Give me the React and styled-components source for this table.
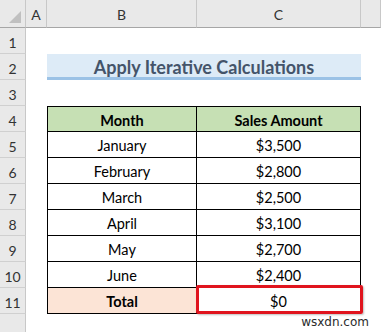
import React from 'react'
import styled, { createGlobalStyle } from 'styled-components'

const GlobalStyle = createGlobalStyle`
  html, body { margin: 0; padding: 0; background: #fff; }
  body { font-family: Lato, "Open Sans", sans-serif; overflow: hidden; }
`

const SALES = [
  { month: 'January', amount: '$3,500' },
  { month: 'February', amount: '$2,800' },
  { month: 'March', amount: '$2,500' },
  { month: 'April', amount: '$3,100' },
  { month: 'May', amount: '$2,700' },
  { month: 'June', amount: '$2,400' },
]

const Sheet = styled.div`
  position: relative;
  display: grid;
  grid-template-columns: 26px 21px 150px 164px 1fr;
  grid-template-rows: 28px repeat(12, 26px);
  width: 381px;
  height: 332px;
  overflow: hidden;
  background: #fff;
`

const Corner = styled.div`
  background: #e9e9e9;
  border-right: 1px solid #c8c8c8;
  border-bottom: 1px solid #a6a6a6;
  box-sizing: border-box;
  display: flex;
  align-items: flex-end;
  justify-content: flex-end;
  padding: 0 4px 4px 0;
`

const Triangle = styled.div`
  width: 0;
  height: 0;
  border-left: 12px solid transparent;
  border-bottom: 12px solid #c0c0c0;
`

const ColHead = styled.div`
  background: #e9e9e9;
  border-right: 1px solid #c8c8c8;
  border-bottom: 1px solid #a6a6a6;
  box-sizing: border-box;
  display: flex;
  align-items: center;
  justify-content: center;
  padding-top: 2px;
  font-size: 14px;
  color: #333;
`

const RowHead = styled.div`
  background: #e9e9e9;
  border-right: 1px solid #c8c8c8;
  border-bottom: 1px solid #d0d0d0;
  box-sizing: border-box;
  display: flex;
  align-items: center;
  justify-content: center;
  padding-top: 3px;
  font-size: 14px;
  color: #333;
`

const Blank = styled.div``

const Title = styled.div`
  grid-column: 3 / 5;
  background: #ddebf7;
  border-bottom: 3px solid #9bc2e6;
  box-sizing: border-box;
  display: flex;
  align-items: center;
  justify-content: center;
  padding-top: 2px;
  font-weight: 700;
  font-size: 18px;
  color: #44546a;
`

const Cell = styled.div`
  position: relative;
  box-sizing: border-box;
  display: flex;
  align-items: center;
  justify-content: center;
  padding-top: 2px;
  font-size: 14.5px;
  color: #000;
  background: ${p => p.$bg || '#fff'};
  font-weight: ${p => (p.$bold ? 700 : 400)};
  border-right: 1px solid #000;
  border-bottom: 1px solid #000;
  border-left: ${p => (p.$first ? '1px solid #000' : 'none')};
  border-top: ${p => (p.$top ? '1px solid #000' : 'none')};
`

const Highlight = styled.div`
  position: absolute;
  top: -3px;
  left: -1px;
  right: -3px;
  bottom: -1px;
  border: 3px solid #e0141e;
  border-radius: 2px;
  box-shadow: 1px 1px 2px rgba(0, 0, 0, 0.25);
  pointer-events: none;
`

const Watermark = styled.div`
  position: absolute;
  right: 12px;
  bottom: 3px;
  font-family: "DejaVu Sans", sans-serif;
  font-size: 12px;
  color: #2b2b2b;
  text-shadow: 0 0 2px #fff;
`

function App() {
  const rowNums = Array.from({ length: 12 }, (_, i) => i + 1)

  const renderRow = n => {
    if (n === 2) return <Title>Apply Iterative Calculations</Title>
    if (n === 4) {
      return (
        <>
          <Cell $first $top $bold $bg="#c6e0b4">Month</Cell>
          <Cell $top $bold $bg="#c6e0b4">Sales Amount</Cell>
        </>
      )
    }
    if (n >= 5 && n <= 10) {
      const s = SALES[n - 5]
      return (
        <>
          <Cell $first>{s.month}</Cell>
          <Cell>{s.amount}</Cell>
        </>
      )
    }
    if (n === 11) {
      return (
        <>
          <Cell $first $bold $bg="#fce4d6">Total</Cell>
          <Cell>
            $0
            <Highlight />
          </Cell>
        </>
      )
    }
    return (
      <>
        <Blank />
        <Blank />
      </>
    )
  }

  return (
    <>
      <GlobalStyle />
      <Sheet>
        <Corner><Triangle /></Corner>
        <ColHead>A</ColHead>
        <ColHead>B</ColHead>
        <ColHead>C</ColHead>
        <ColHead />
        {rowNums.map(n => (
          <React.Fragment key={n}>
            <RowHead>{n < 12 ? n : ''}</RowHead>
            <Blank />
            {renderRow(n)}
            <Blank />
          </React.Fragment>
        ))}
        <Watermark>wsxdn.com</Watermark>
      </Sheet>
    </>
  )
}

export default App
